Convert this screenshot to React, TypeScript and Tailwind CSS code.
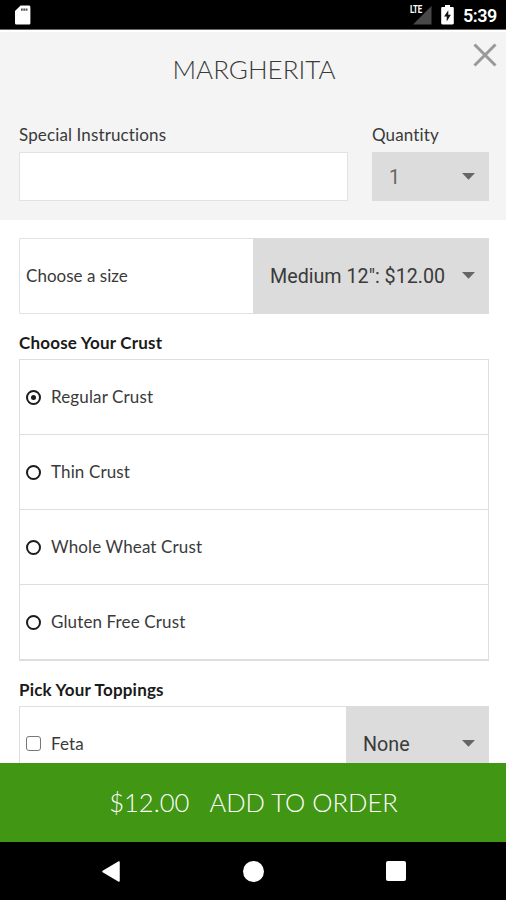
import { useState } from "react";
import clsx from "clsx";

const crusts = [
  "Regular Crust",
  "Thin Crust",
  "Whole Wheat Crust",
  "Gluten Free Crust",
];

const StatusBar = () => {
  return (
    <div className="flex h-[30px] shrink-0 items-center border-b border-b-[#666] bg-black pr-[9px] pl-[14px] text-white">
      <svg width="17" height="20" viewBox="0 0 17 20" className="mt-[1px]">
        <path
          d="M6.6.5h8.2c.9 0 1.6.7 1.6 1.6v15.8c0 .9-.7 1.6-1.6 1.6H2.6c-.9 0-1.6-.7-1.6-1.6V6z"
          fill="#fff"
        />
        <path d="M7 3.500h1.800v2.200H7zM9.300 3.500h2.200v2.200H9.300zM12 3.500h1.500v2.200H12z" fill="#555" />
      </svg>
      <div className="flex-1" />
      <div className="relative mt-[2px] h-[19px] w-[23px]">
        <svg width="23" height="19" viewBox="0 0 23 19">
          <path d="M22.500 0v18.500H4z" fill="#484848" />
        </svg>
        <span className="absolute top-[-2px] left-[1px] origin-left scale-x-[0.72] font-['Roboto'] text-[11px] leading-[12px] font-bold tracking-[-0.4px]">
          LTE
        </span>
      </div>
      <svg width="13" height="20" viewBox="0 0 13 20" className="mt-[1px] ml-[9px]">
        <path
          d="M4 0h5v2h2.600c.7 0 1.200.5 1.200 1.200v15.100c0 .7-.5 1.200-1.200 1.200H1.400c-.7 0-1.200-.5-1.200-1.200V3.200C.2 2.500.7 2 1.400 2H4z"
          fill="#fff"
        />
        <path d="M7.300 5.200v4.500h2.600L5.700 16.600v-5H3z" fill="#111" />
      </svg>
      <span className="mt-[3px] ml-[9px] w-[34px] font-['Roboto'] text-[18px] leading-[20px] font-semibold tracking-[-0.5px] whitespace-nowrap">
        5:39
      </span>
    </div>
  );
};

const Select = ({ value, className }: { value: string; className: string }) => {
  return (
    <button
      className={clsx(
        "flex items-center justify-between bg-[#dcdcdc] pr-[14px] pl-[17px] font-['Roboto'] text-[19.7px] tracking-normal whitespace-nowrap",
        className
      )}
    >
      <span className="mt-[2px]">{value}</span>
      <svg width="13" height="7" viewBox="0 0 13 7" className="mb-[1px]">
        <path d="M0 0h13L6.500 6.800z" fill="#666" />
      </svg>
    </button>
  );
};

const Radio = ({ checked }: { checked: boolean }) => {
  return (
    <span className="flex size-[15px] items-center justify-center rounded-full border-2 border-[#1c1c1c]">
      {checked && <span className="size-[5px] rounded-full bg-[#1c1c1c]" />}
    </span>
  );
};

const NavBar = () => {
  return (
    <div className="flex h-[58px] shrink-0 items-center justify-between bg-black pr-[100px] pl-[102px]">
      <svg width="18" height="21" viewBox="0 0 18 21">
        <path
          d="M17 1v19L1 10.500z"
          fill="#fff"
          stroke="#fff"
          strokeWidth="1.500"
          strokeLinejoin="round"
        />
      </svg>
      <div className="size-[21px] rounded-full bg-white" />
      <div className="size-[20px] rounded-[2px] bg-white" />
    </div>
  );
};

export default function App() {
  const [crust, setCrust] = useState(0);

  return (
    <main className="flex h-[900px] w-[506px] flex-col overflow-hidden bg-white font-['Lato',sans-serif] text-[17px] tracking-[0.13px] text-[#3a3a3a]">
      <StatusBar />

      <header className="relative h-[190px] shrink-0 border-t-2 border-t-white bg-[#f4f4f4] pr-[17px] pl-[19px]">
        <h1 className="pt-[21px] text-center text-[26px] leading-[32px] font-light tracking-normal">
          MARGHERITA
        </h1>
        <button className="absolute top-[11px] right-[9px]">
          <svg width="24" height="24" viewBox="0 0 24 24">
            <path d="M1.500 1.500l21 21M22.500 1.500l-21 21" stroke="#999" strokeWidth="3" />
          </svg>
        </button>
        <div className="mt-[40px] flex gap-[24px]">
          <label className="w-[329px]">
            <span className="block h-[27px] leading-[20px]">Special Instructions</span>
            <input className="block h-[49px] w-full border border-[#e2e2e2] bg-white" />
          </label>
          <div className="flex-1">
            <span className="block h-[27px] leading-[20px]">Quantity</span>
            <Select value="1" className="h-[49px] w-full text-[#666]" />
          </div>
        </div>
      </header>

      <div className="min-h-0 flex-1 overflow-hidden pt-[18px] pr-[17px] pl-[19px]">
        <div className="flex h-[76px]">
          <div className="flex w-[234px] items-center border border-r-0 border-[#e2e2e2] pl-[6px] tracking-[0.02px]">
            Choose a size
          </div>
          <Select value={'Medium 12": $12.00'} className="flex-1" />
        </div>

        <h2 className="mt-[19px] mb-[6px] h-[20px] leading-[20px] font-bold tracking-[0.2px] text-[#1a1a1a]">
          Choose Your Crust
        </h2>
        <div className="h-[302px] border border-b-2 border-[#dedede]">
          {crusts.map((name, i) => (
            <div
              key={name}
              onClick={() => setCrust(i)}
              className="flex h-[75px] items-center gap-[10px] border-b border-b-[#dedede] pl-[6px] last:h-[74px] last:border-b-0"
            >
              <Radio checked={i === crust} />
              {name}
            </div>
          ))}
        </div>

        <h2 className="mt-[19px] mb-[6px] h-[20px] leading-[20px] font-bold tracking-[0.2px] text-[#1a1a1a]">
          Pick Your Toppings
        </h2>
        <div className="flex h-[76px]">
          <div className="flex w-[327px] items-center gap-[10px] border border-r-0 border-[#dedede] pl-[6px]">
            <span className="mb-[2px] size-[15px] rounded-[3px] border border-[#777]" />
            Feta
          </div>
          <Select value="None" className="flex-1" />
        </div>
      </div>

      <button className="flex h-[79px] shrink-0 items-center justify-center gap-[20px] bg-[#419613] pl-[1px] text-[25.6px] font-light tracking-normal text-white">
        <span>$12.00</span>
        <span>ADD TO ORDER</span>
      </button>
      <NavBar />
    </main>
  );
}
